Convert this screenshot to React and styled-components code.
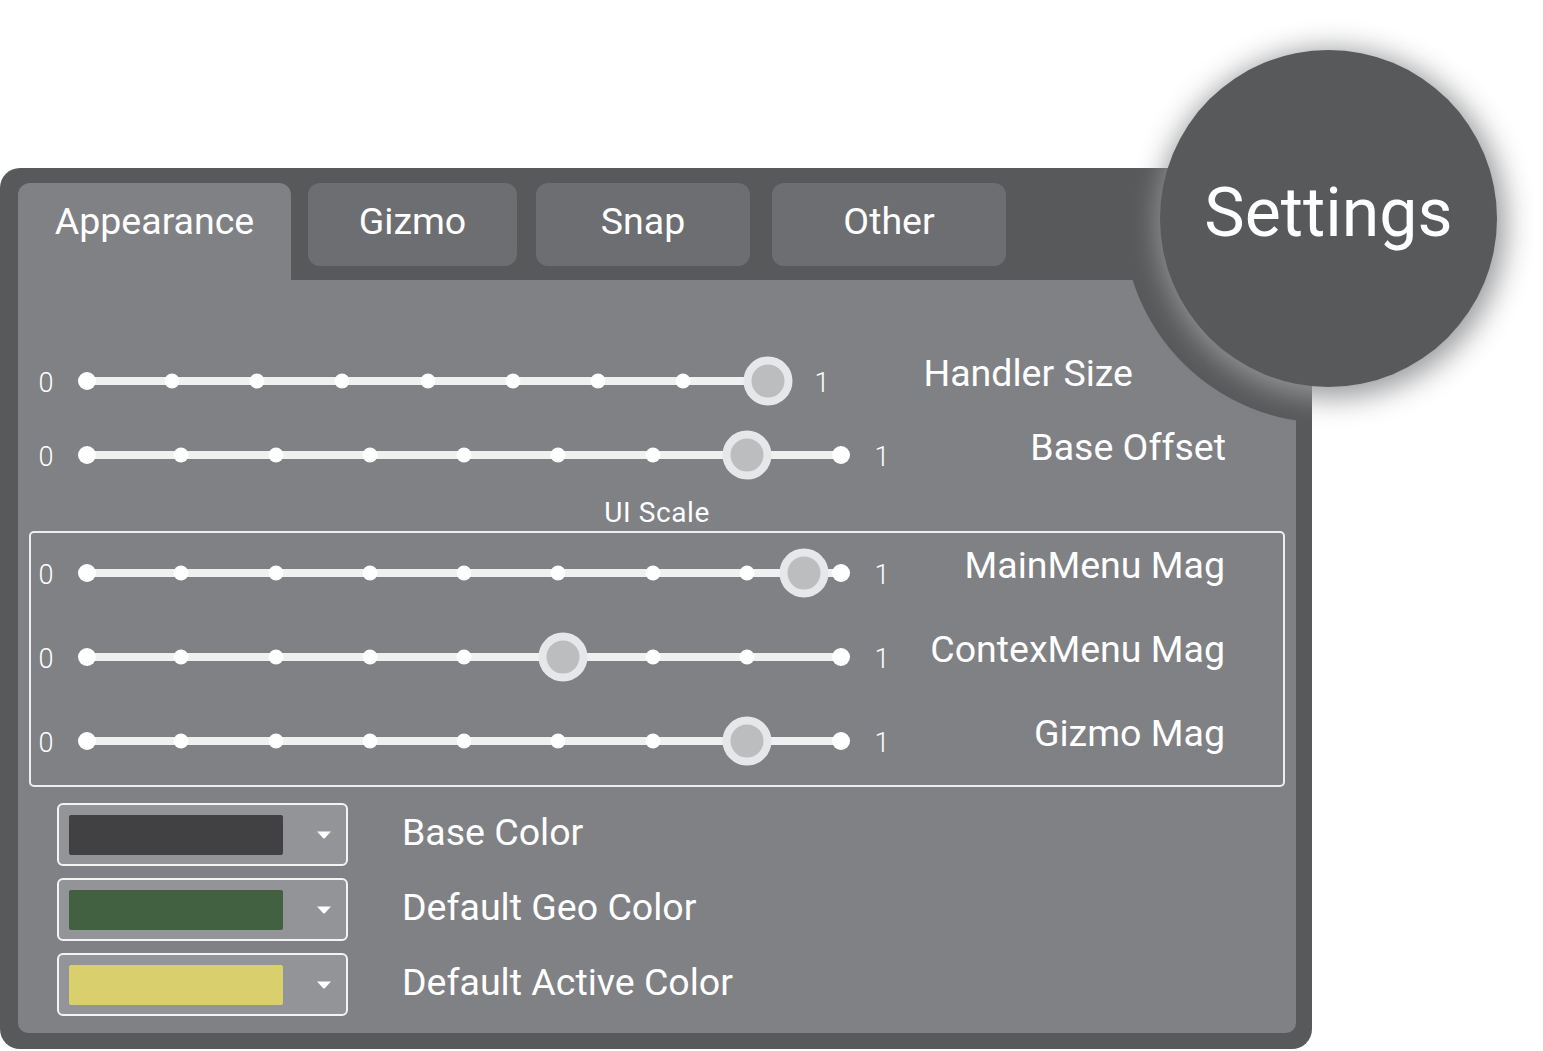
import styled, { createGlobalStyle } from "styled-components";

const GlobalStyle = createGlobalStyle`
  body {
    margin: 0;
    background: #fff;
    font-family: Roboto, "Liberation Sans", sans-serif;
  }
`;

const Stage = styled.div`
  position: relative;
  width: 1543px;
  height: 1051px;
  overflow: hidden;
`;

const Panel = styled.div`
  position: relative;
  box-sizing: border-box;
  margin-top: 168px;
  width: 1312px;
  height: 881px;
  padding: 15px 16px 16px 18px;
  background: #58595b;
  border-radius: 20px;
  overflow: hidden;
  display: flex;
  flex-direction: column;
`;

const TabRow = styled.div`
  display: flex;
  align-items: flex-start;
  height: 97px;
`;

const Tab = styled.div`
  box-sizing: border-box;
  width: ${p => p.$w}px;
  height: ${p => (p.$active ? 97 : 83)}px;
  margin-left: ${p => p.$ml || 0}px;
  padding-top: 16px;
  background: ${p => (p.$active ? "#808184" : "#6d6e71")};
  border-radius: ${p => (p.$active ? "12px 12px 0 0" : "12px")};
  color: #fff;
  font-size: 37.5px;
  line-height: 44px;
  text-align: center;
`;

const Content = styled.div`
  flex: 1;
  background: #808184;
  border-radius: 0 0 10px 10px;
  padding-top: 76px;
  display: flex;
  flex-direction: column;
`;

const SliderStack = styled.div`
  display: flex;
  flex-direction: column;
  gap: ${p => p.$gap}px;
`;

const SliderRow = styled.div`
  display: flex;
  align-items: center;
  height: 50px;
  padding-left: ${p => p.$indent || 0}px;
`;

const Digit = styled.div`
  width: 30px;
  margin-top: 4px;
  text-align: center;
  color: #fff;
  font-size: 27px;
  font-weight: 300;
`;

const ZeroDigit = styled(Digit)`
  margin-right: 26px;
`;

const OneDigit = styled(Digit)`
  margin-left: ${p => p.$ml}px;
`;

const Track = styled.div`
  position: relative;
  width: ${p => p.$len}px;
  height: 8px;
  background: #eff0f0;
  border-radius: 4px;
`;

const Dot = styled.span.attrs(p => ({ style: { left: `${p.$pos * 100}%` } }))`
  position: absolute;
  top: 50%;
  width: ${p => (p.$end ? 18 : 15)}px;
  height: ${p => (p.$end ? 18 : 15)}px;
  border-radius: 50%;
  background: #fff;
  transform: translate(-50%, -50%);
`;

const Thumb = styled.span.attrs(p => ({ style: { left: `${p.$pos * 100}%` } }))`
  position: absolute;
  top: 50%;
  box-sizing: border-box;
  width: 49px;
  height: 49px;
  border-radius: 50%;
  border: 8px solid #e6e7e8;
  background: #bcbdbf;
  transform: translate(-50%, -50%);
`;

const Name = styled.div`
  flex: 1;
  margin-bottom: 16px;
  padding-right: ${p => p.$pr}px;
  text-align: right;
  color: #fff;
  font-size: 37.5px;
  white-space: nowrap;
`;

const Caption = styled.div`
  margin-top: 18px;
  line-height: 30px;
  text-align: center;
  color: #fff;
  font-size: 28px;
  letter-spacing: 0.6px;
`;

const GroupBox = styled.div`
  box-sizing: border-box;
  margin: 3px 0 0 11px;
  width: 1256px;
  padding: 15px 0 19px;
  border: 2px solid #eeeeef;
  border-radius: 5px;
`;

const ColorList = styled.div`
  margin: 16px 0 0 39px;
  display: flex;
  flex-direction: column;
  gap: 12px;
`;

const ColorRow = styled.div`
  display: flex;
  align-items: center;
  height: 63px;
`;

const ColorPicker = styled.div`
  box-sizing: border-box;
  width: 291px;
  height: 63px;
  padding: 10px 14px 10px 10px;
  border: 2px solid #f4f4f4;
  border-radius: 6px;
  background: #939497;
  display: flex;
  align-items: center;
  justify-content: space-between;
`;

const Swatch = styled.div`
  width: 214px;
  height: 40px;
  border-radius: 2px;
  background: ${p => p.$color};
`;

const Caret = styled.svg`
  width: 16px;
  height: 8px;
  margin-top: 1px;
`;

const ColorName = styled.div`
  margin: 0 0 6px 54px;
  color: #fff;
  font-size: 37.5px;
`;

const RingCut = styled.div`
  position: absolute;
  left: 1123px;
  top: -155px;
  width: 410px;
  height: 410px;
  border-radius: 50%;
  background: #58595b;
`;

const Badge = styled.div`
  position: absolute;
  left: 1160px;
  top: 50px;
  width: 337px;
  height: 337px;
  border-radius: 50%;
  background: #58595b;
  box-shadow: 3px 5px 28px 6px rgba(150, 151, 153, 0.95);
  display: flex;
  align-items: center;
  justify-content: center;
  padding-bottom: 12px;
  box-sizing: border-box;
  color: #fff;
  font-size: 68px;
`;

const Slider = ({ len, value }) => (
  <Track $len={len}>
    {Array.from({ length: 9 }, (_, i) => (
      <Dot key={i} $pos={i / 8} $end={i === 0 || i === 8} />
    ))}
    <Thumb $pos={value} />
  </Track>
);

const SettingRow = ({ name, value, len = 754, oneGap = 26, pr, indent }) => (
  <SliderRow $indent={indent}>
    <ZeroDigit>0</ZeroDigit>
    <Slider len={len} value={value} />
    <OneDigit $ml={oneGap}>1</OneDigit>
    <Name $pr={pr}>{name}</Name>
  </SliderRow>
);

const colors = [
  { name: "Base Color", color: "#414143" },
  { name: "Default Geo Color", color: "#426141" },
  { name: "Default Active Color", color: "#d9cf6d" },
];

export default function App() {
  return (
    <Stage>
      <GlobalStyle />
      <Panel>
        <TabRow>
          <Tab $active $w={273}>Appearance</Tab>
          <Tab $w={209} $ml={17}>Gizmo</Tab>
          <Tab $w={214} $ml={19}>Snap</Tab>
          <Tab $w={234} $ml={22}>Other</Tab>
        </TabRow>
        <Content>
          <SliderStack $gap={24}>
            <SettingRow name="Handler Size" value={1} len={681} oneGap={39} pr={163} indent={13} />
            <SettingRow name="Base Offset" value={0.875} pr={70} indent={13} />
          </SliderStack>
          <Caption>UI Scale</Caption>
          <GroupBox>
            <SliderStack $gap={34}>
              <SettingRow name="MainMenu Mag" value={0.951} pr={58} />
              <SettingRow name="ContexMenu Mag" value={0.631} pr={58} />
              <SettingRow name="Gizmo Mag" value={0.875} pr={58} />
            </SliderStack>
          </GroupBox>
          <ColorList>
            {colors.map(c => (
              <ColorRow key={c.name}>
                <ColorPicker>
                  <Swatch $color={c.color} />
                  <Caret viewBox="0 0 16 8">
                    <path d="M1 0.5 H15 L9 7 Q8 8 7 7 Z" fill="#fff" />
                  </Caret>
                </ColorPicker>
                <ColorName>{c.name}</ColorName>
              </ColorRow>
            ))}
          </ColorList>
        </Content>
        <RingCut />
      </Panel>
      <Badge>Settings</Badge>
    </Stage>
  );
}
